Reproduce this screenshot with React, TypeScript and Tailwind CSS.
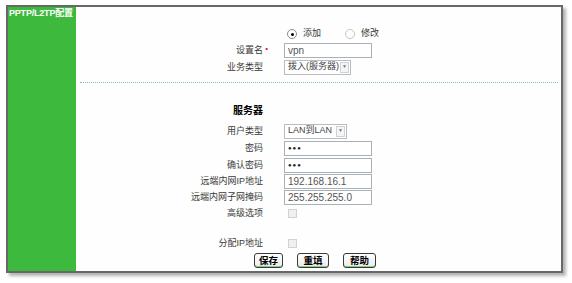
import React from "react";

const font = { fontFamily: '"Liberation Sans", "Noto Sans CJK SC", sans-serif' };

function Row({ label, children, mt, bold, star }: { label?: string; children?: React.ReactNode; mt: string; bold?: boolean; star?: boolean }) {
  return (
    <div className={`flex items-center h-[14px] ${mt}`}>
      <div className={`w-[187px] text-right text-[9px] leading-[14px] whitespace-nowrap ${bold ? "font-bold text-black text-[10px]" : "text-[#3a3a3a]"}`}>
        <span className="relative">
          {label}
          {star && <span className="absolute -right-[5px] top-[-3px] text-[#e0201a] text-[8px]">•</span>}
        </span>
      </div>
      <div className="ml-[21px] flex items-center">{children}</div>
    </div>
  );
}

function Input({ value, w = "w-[88px]", pw }: { value: string; w?: string; pw?: boolean }) {
  return (
    <div className={`${w} h-[15px] border border-[#a8b0b8] bg-white flex items-center pl-[3px] text-[10px] ${pw ? "text-[#222]" : "text-[#555]"}`}>
      {pw ? <span className="text-[6px] leading-none tracking-[1px]">●●●</span> : value}
    </div>
  );
}

function Select({ value, w }: { value: string; w: string }) {
  return (
    <div className={`${w} h-[15px] border border-[#b7bdc3] bg-white flex items-center justify-between pl-[3px] pr-[1px] text-[9px] text-[#444]`}>
      <span className="whitespace-nowrap">{value}</span>
      <span className="w-[9px] h-[11px] border border-[#d0d3d6] bg-[#f5f5f5] flex items-center justify-center text-[5px] text-[#777]">▼</span>
    </div>
  );
}

function Radio({ checked }: { checked?: boolean }) {
  return (
    <span className={`w-[10px] h-[10px] rounded-full border ${checked ? "border-[#8a8a8a]" : "border-[#c4c4c4]"} bg-white flex items-center justify-center`}>
      {checked && <span className="w-[3px] h-[3px] rounded-full bg-black" />}
    </span>
  );
}

function Check() {
  return <span className="ml-[4px] w-[9px] h-[9px] border border-[#d2d2d2] bg-[#f0f0f0]" />;
}

function Btn({ label, w }: { label: string; w: string }) {
  return (
    <button className={`${w} h-[15px] rounded-[3px] border border-[#3a3a3a] bg-gradient-to-b from-white to-[#ececec] shadow-[inset_0_-1px_0_#7fcf7f] text-[9.5px] font-bold text-black leading-none flex items-center justify-center`}>
      {label}
    </button>
  );
}

export default function App() {
  return (
    <div className="w-[572px] h-[283px] bg-white pt-[5px] pl-[6px]" style={font}>
      <div className="w-[557px] h-[268px] border-2 border-[#686868] flex shadow-[3px_3px_3px_rgba(0,0,0,0.3)] bg-[#fdfefd]">
        <div className="w-[68px] bg-[#3dba3d] text-white font-bold text-[9px] tracking-[-0.2px] leading-none pt-[2px] pl-[1px] whitespace-nowrap overflow-hidden">PPTP/L2TP配置</div>
        <div className="flex-1 flex flex-col">
          <div className="flex items-center h-[14px] mt-[20px] pl-[211px] text-[9px] text-[#3a3a3a]">
            <Radio checked />
            <span className="ml-[6px]">添加</span>
            <span className="ml-[24px]"><Radio /></span>
            <span className="ml-[6px]">修改</span>
          </div>
          <Row label="设置名" star mt="mt-[2px]"><Input value="vpn" /></Row>
          <Row label="业务类型" mt="mt-[3px]"><Select value="拨入(服务器)" w="w-[67px]" /></Row>
          <div className="mt-[8px] ml-[4px] mr-[3px] border-t border-dotted border-[#8fbab2]" />
          <Row label="服务器" bold mt="mt-[21px]" />
          <Row label="用户类型" mt="mt-[6px]"><Select value="LAN到LAN" w="w-[63px]" /></Row>
          <Row label="密码" mt="mt-[3px]"><Input value="" pw /></Row>
          <Row label="确认密码" mt="mt-[3px]"><Input value="" pw /></Row>
          <Row label="远端内网IP地址" mt="mt-[2px]"><Input value="192.168.16.1" /></Row>
          <Row label="远端内网子网掩码" mt="mt-[2px]"><Input value="255.255.255.0" /></Row>
          <Row label="高级选项" mt="mt-[2px]"><Check /></Row>
          <Row label="分配IP地址" mt="mt-[16px]"><Check /></Row>
          <div className="flex items-center mt-[3px] pl-[178px] gap-[14px]">
            <Btn label="保存" w="w-[29px]" />
            <Btn label="重填" w="w-[32px]" />
            <Btn label="帮助" w="w-[33px]" />
          </div>
        </div>
      </div>
    </div>
  );
}
